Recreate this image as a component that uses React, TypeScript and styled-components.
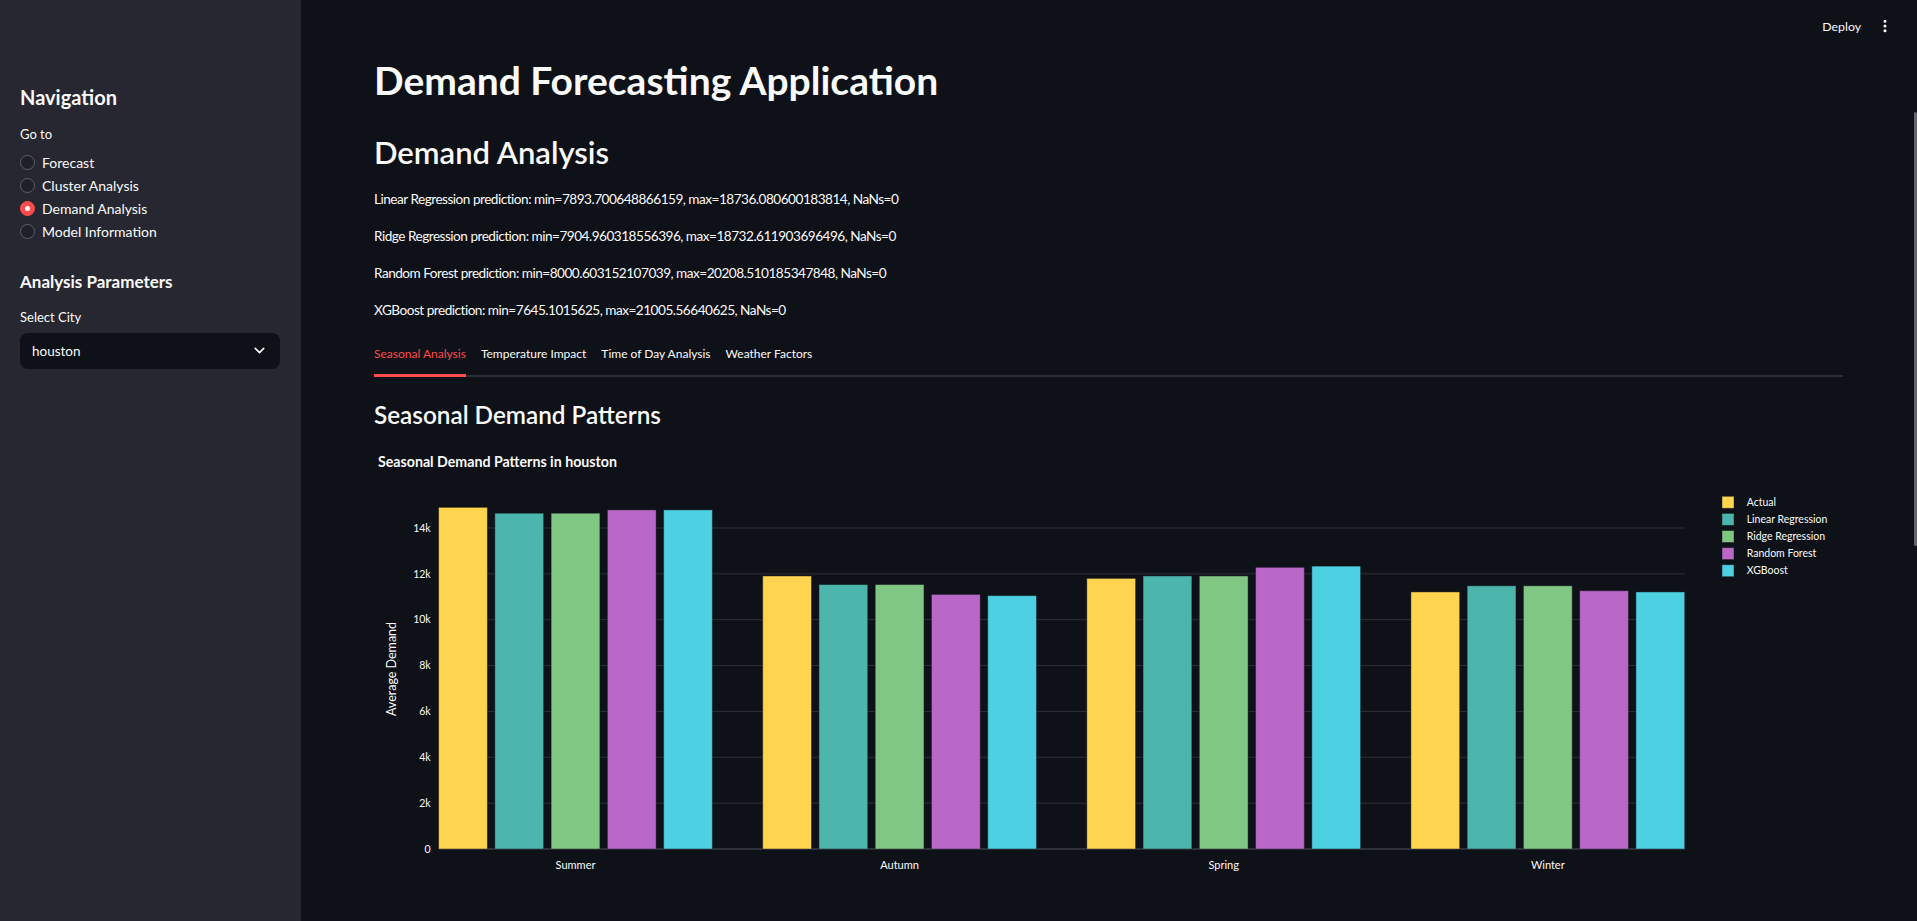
import React from "react";
import styled, { createGlobalStyle } from "styled-components";
import { ChevronDown, EllipsisVertical } from "lucide-react";

const FONT = `Lato, "Noto Sans", "DejaVu Sans", sans-serif`;

const GlobalStyle = createGlobalStyle`
  html, body { margin: 0; padding: 0; background: #0e1117; }
  body { font-family: ${FONT}; color: #fafafa; }
  *, *::before, *::after { box-sizing: border-box; }
`;

const Shell = styled.div`
  display: flex;
  width: 100%;
  height: 100vh;
  overflow: hidden;
`;

/* ---------- Sidebar ---------- */
const Sidebar = styled.aside`
  flex: 0 0 301px;
  background: #262730;
  padding: 85px 21px 0 20px;
  display: flex;
  flex-direction: column;
`;

const SideHeading = styled.h2<{ $size: number; $mt: number }>`
  margin: ${(p) => p.$mt}px 0 0;
  font-size: ${(p) => p.$size}px;
  font-weight: 700;
  line-height: 1.2;
  color: #fafafa;
`;

const FieldLabel = styled.div<{ $mt: number }>`
  margin-top: ${(p) => p.$mt}px;
  font-size: 13px;
  line-height: 1.2;
  color: #fafafa;
`;

const RadioGroup = styled.div`
  margin-top: 8px;
  display: flex;
  flex-direction: column;
`;

const RadioRow = styled.label`
  height: 23px;
  display: flex;
  align-items: center;
  gap: 7px;
  font-size: 14px;
  color: #fafafa;
`;

const RadioDot = styled.span<{ $on: boolean }>`
  width: 15px;
  height: 15px;
  border-radius: 50%;
  flex-shrink: 0;
  display: flex;
  align-items: center;
  justify-content: center;
  background: ${(p) => (p.$on ? "#ff4b4b" : "#1f2028")};
  border: 1px solid ${(p) => (p.$on ? "#ff4b4b" : "#5d5f69")};
  &::after {
    content: "";
    width: 5px;
    height: 5px;
    border-radius: 50%;
    background: ${(p) => (p.$on ? "#ffffff" : "transparent")};
  }
`;

const SelectBox = styled.div`
  margin-top: 7px;
  height: 36px;
  border-radius: 8px;
  background: #0e1117;
  display: flex;
  align-items: center;
  justify-content: space-between;
  padding: 0 12px;
  font-size: 13.5px;
  color: #fafafa;
`;

/* ---------- Main ---------- */
const Main = styled.main`
  flex: 1;
  min-width: 0;
  position: relative;
  display: flex;
  flex-direction: column;
`;

const Header = styled.header`
  height: 52px;
  flex-shrink: 0;
  display: flex;
  align-items: center;
  justify-content: flex-end;
  gap: 16px;
  padding-right: 24px;
  font-size: 12.3px;
  color: #fafafa;
`;

const ScrollThumb = styled.div`
  position: absolute;
  right: 0;
  top: 112px;
  width: 3px;
  height: 434px;
  border-radius: 2px;
  background: #66676e;
`;

const Content = styled.div`
  padding: 5px 74px 0 73px;
  display: flex;
  flex-direction: column;
`;

const Title = styled.h1`
  margin: 0;
  font-size: 39px;
  font-weight: 700;
  line-height: 1.2;
`;

const SectionTitle = styled.h2<{ $size: number; $mt: number }>`
  margin: ${(p) => p.$mt}px 0 0;
  font-size: ${(p) => p.$size}px;
  font-weight: 600;
  line-height: 1.2;
`;

const InfoList = styled.div`
  margin-top: 10px;
  display: flex;
  flex-direction: column;
`;

const Info = styled.p`
  margin: 0;
  height: 37px;
  line-height: 37px;
  font-size: 13.6px;
  letter-spacing: -0.5px;
  white-space: nowrap;
`;

const TabList = styled.div`
  margin-top: 7px;
  display: flex;
  gap: 15px;
  border-bottom: 2px solid #2c2e36;
`;

const Tab = styled.button<{ $active: boolean }>`
  all: unset;
  height: 41px;
  margin-bottom: -2px;
  padding-bottom: 3px;
  display: flex;
  align-items: center;
  font-family: ${FONT};
  font-size: 12px;
  color: ${(p) => (p.$active ? "#ff4b4b" : "#fafafa")};
  border-bottom: 3px solid ${(p) => (p.$active ? "#ff4b4b" : "transparent")};
  box-sizing: border-box;
  cursor: pointer;
`;

const ChartSvg = styled.svg`
  margin-top: 9.5px;
  display: block;
  width: 1469px;
  height: 450px;
  font-family: ${FONT};
`;

const ChartText = styled.text<{ $size: number; $weight?: number }>`
  fill: #fafafa;
  font-size: ${(p) => p.$size}px;
  font-weight: ${(p) => p.$weight ?? 400};
`;

/* ---------- Chart data ---------- */
const seasons = ["Summer", "Autumn", "Spring", "Winter"];
const series = [
  { name: "Actual", color: "#FFD54F", values: [14900, 11908, 11801, 11211] },
  { name: "Linear Regression", color: "#4DB6AC", values: [14644, 11533, 11908, 11479] },
  { name: "Ridge Regression", color: "#81C784", values: [14644, 11533, 11908, 11479] },
  { name: "Random Forest", color: "#BA68C8", values: [14790, 11103, 12284, 11264] },
  { name: "XGBoost", color: "#4DD0E1", values: [14790, 11050, 12337, 11211] },
];

const PLOT_L = 64.6;
const PLOT_R = 1311;
const ZERO_Y = 410;
const PX_PER = 45.86 / 2000;
const GROUP = 324.1;
const STEP = 56.25;
const BAR_W = 48.8;

const ticks = [0, 2000, 4000, 6000, 8000, 10000, 12000, 14000];

function Chart() {
  return (
    <ChartSvg viewBox="0 0 1469 450">
      <ChartText $size={14.2} $weight={700} x={4} y={28}>
        Seasonal Demand Patterns in houston
      </ChartText>

      {ticks.map((t) => {
        const y = ZERO_Y - t * PX_PER;
        return (
          <g key={t}>
            <line
              x1={PLOT_L}
              x2={PLOT_R}
              y1={y}
              y2={y}
              stroke={t === 0 ? "#3a3c45" : "#2f3139"}
              strokeWidth={t === 0 ? 1.6 : 1}
            />
            <ChartText $size={10.5} x={56.7} y={y + 3.7} textAnchor="end">
              {t === 0 ? "0" : `${t / 1000}k`}
            </ChartText>
          </g>
        );
      })}

      <ChartText $size={12.5} x={0} y={0} textAnchor="middle" transform="translate(22 230) rotate(-90)">
        Average Demand
      </ChartText>

      {seasons.map((s, i) => {
        const gx = PLOT_L + i * GROUP;
        return (
          <g key={s}>
            {series.map((ser, j) => {
              const h = ser.values[i] * PX_PER;
              return (
                <rect
                  key={ser.name}
                  x={gx + j * STEP}
                  y={ZERO_Y - h}
                  width={BAR_W}
                  height={h}
                  fill={ser.color}
                  stroke="rgba(14,17,23,0.45)"
                  strokeWidth={1}
                />
              );
            })}
            <ChartText $size={11} x={gx + (4 * STEP + BAR_W) / 2} y={430} textAnchor="middle">
              {s}
            </ChartText>
          </g>
        );
      })}

      {series.map((ser, k) => {
        const cy = 63.3 + k * 17.1;
        return (
          <g key={ser.name}>
            <rect x={1348} y={cy - 6} width={12} height={12} fill={ser.color} stroke="rgba(14,17,23,0.45)" strokeWidth={1} />
            <ChartText $size={10.5} x={1372.7} y={cy + 3.6}>
              {ser.name}
            </ChartText>
          </g>
        );
      })}
    </ChartSvg>
  );
}

const navItems = ["Forecast", "Cluster Analysis", "Demand Analysis", "Model Information"];
const tabs = ["Seasonal Analysis", "Temperature Impact", "Time of Day Analysis", "Weather Factors"];
const infos = [
  "Linear Regression prediction: min=7893.700648866159, max=18736.080600183814, NaNs=0",
  "Ridge Regression prediction: min=7904.960318556396, max=18732.611903696496, NaNs=0",
  "Random Forest prediction: min=8000.603152107039, max=20208.510185347848, NaNs=0",
  "XGBoost prediction: min=7645.1015625, max=21005.56640625, NaNs=0",
];

export default function App() {
  return (
    <>
      <GlobalStyle />
      <Shell>
        <Sidebar>
          <SideHeading $size={20} $mt={0}>Navigation</SideHeading>
          <FieldLabel $mt={18}>Go to</FieldLabel>
          <RadioGroup>
            {navItems.map((n) => (
              <RadioRow key={n}>
                <RadioDot $on={n === "Demand Analysis"} />
                {n}
              </RadioRow>
            ))}
          </RadioGroup>
          <SideHeading $size={17} $mt={29}>Analysis Parameters</SideHeading>
          <FieldLabel $mt={18}>Select City</FieldLabel>
          <SelectBox>
            <span>houston</span>
            <ChevronDown size={17} strokeWidth={2.2} color="#fafafa" />
          </SelectBox>
        </Sidebar>
        <Main>
          <Header>
            <span>Deploy</span>
            <EllipsisVertical size={16} strokeWidth={2.6} color="#fafafa" />
          </Header>
          <ScrollThumb />
          <Content>
            <Title>Demand Forecasting Application</Title>
            <SectionTitle $size={31} $mt={30}>Demand Analysis</SectionTitle>
            <InfoList>
              {infos.map((t) => (
                <Info key={t}>{t}</Info>
              ))}
            </InfoList>
            <TabList>
              {tabs.map((t, i) => (
                <Tab key={t} $active={i === 0}>{t}</Tab>
              ))}
            </TabList>
            <SectionTitle $size={24.3} $mt={23.5}>Seasonal Demand Patterns</SectionTitle>
            <Chart />
          </Content>
        </Main>
      </Shell>
    </>
  );
}
